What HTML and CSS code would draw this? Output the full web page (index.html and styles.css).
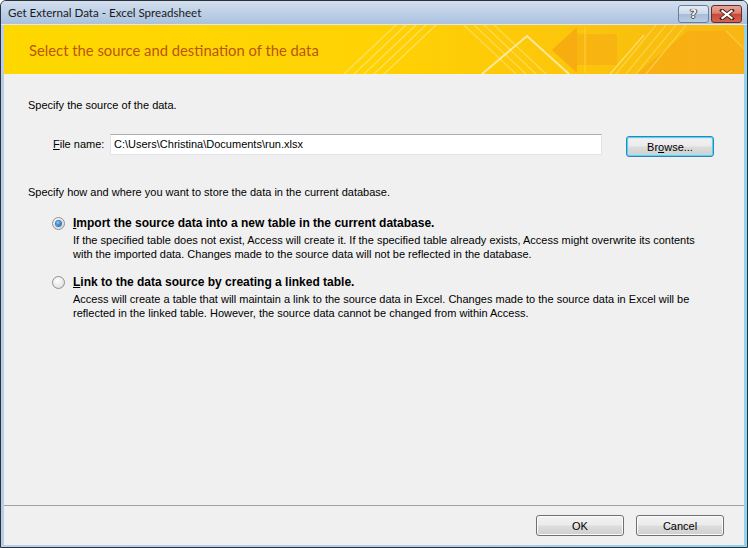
FILE: index.html
```html
<!DOCTYPE html>
<html>
<head>
<meta charset="utf-8">
<link rel="stylesheet" href="styles.css">
</head>
<body>
<div class="window">
  <div class="titlebar">
    <span class="title">Get External Data - Excel Spreadsheet</span>
    <div class="caption-btns">
      <span class="cap help">?</span>
      <span class="cap close">
        <svg width="16" height="11" viewBox="0 0 16 11">
          <path d="M3 1.5 L13 9.5 M13 1.5 L3 9.5" stroke="#4a2320" stroke-width="4" stroke-linecap="square"/>
          <path d="M3.5 2 L12.5 9 M12.5 2 L3.5 9" stroke="#ffffff" stroke-width="2.2" stroke-linecap="square"/>
        </svg>
      </span>
    </div>
  </div>
  <div class="client">
    <div class="banner">
      <svg class="banner-art" width="740" height="49" viewBox="0 0 740 49">
        <defs>
          <linearGradient id="bg" x1="0" y1="0" x2="1" y2="0">
            <stop offset="0" stop-color="#ffd800"/>
            <stop offset="0.5" stop-color="#ffd204"/>
            <stop offset="0.78" stop-color="#fcc50c"/>
            <stop offset="1" stop-color="#f8b714"/>
          </linearGradient>
        </defs>
        <rect width="740" height="49" fill="url(#bg)"/>
        <g stroke="#ffe680" stroke-width="1.4" opacity="0.7">
          <line x1="340" y1="49" x2="392" y2="0"/>
          <line x1="350" y1="49" x2="402" y2="0"/>
          <line x1="360" y1="49" x2="412" y2="0"/>
          <line x1="370" y1="49" x2="422" y2="0"/>
          <line x1="380" y1="49" x2="432" y2="0"/>
        </g>
        <g stroke="#ffe27a" stroke-width="1.3" opacity="0.65">
          <line x1="460" y1="0" x2="512" y2="49"/>
          <line x1="470" y1="0" x2="522" y2="49"/>
          <line x1="480" y1="0" x2="532" y2="49"/>
          <line x1="490" y1="0" x2="542" y2="49"/>
        </g>
        <polygon points="548,25 573,2 573,48" fill="#f6a313" opacity="0.75"/>
        <rect x="573" y="9" width="40" height="31" fill="#f7ab16" opacity="0.6"/>
        <line x1="581" y1="2" x2="581" y2="48" stroke="#ffd34a" stroke-width="1.2" opacity="0.8"/>
        <polyline points="478,49 523,11 565,49" fill="none" stroke="#ffe89a" stroke-width="2"/>
        <line x1="640" y1="10" x2="606" y2="49" stroke="#ffe27a" stroke-width="1.5" opacity="0.8"/>
        <polygon points="632,49 684,6 722,6 740,24 740,49" fill="#f7a916" opacity="0.65"/>
        <g stroke="#ffdc6a" stroke-width="1.3" opacity="0.6">
          <line x1="652" y1="0" x2="612" y2="49"/>
          <line x1="662" y1="0" x2="622" y2="49"/>
          <line x1="672" y1="0" x2="632" y2="49"/>
          <line x1="682" y1="0" x2="642" y2="49"/>
        </g>
        <line x1="722" y1="6" x2="740" y2="24" stroke="#ffd34a" stroke-width="1.2" opacity="0.7"/>
      </svg>
      <h1 class="banner-title">Select the source and destination of the data</h1>
    </div>
    <div class="content">
      <p class="line intro">Specify the source of the data.</p>
      <div class="file-row">
        <label class="file-label"><u>F</u>ile name:</label>
        <div class="textbox">C:\Users\Christina\Documents\run.xlsx</div>
        <span class="button default">Br<u>o</u>wse...</span>
      </div>
      <p class="line intro2">Specify how and where you want to store the data in the current database.</p>
      <div class="option first">
        <div class="option-head">
          <span class="radio checked"><span class="dot"></span></span>
          <span class="option-label"><u>I</u>mport the source data into a new table in the current database.</span>
        </div>
        <p class="option-desc">If the specified table does not exist, Access will create it. If the specified table already exists, Access might overwrite its contents<br>with the imported data. Changes made to the source data will not be reflected in the database.</p>
      </div>
      <div class="option second">
        <div class="option-head">
          <span class="radio"></span>
          <span class="option-label"><u>L</u>ink to the data source by creating a linked table.</span>
        </div>
        <p class="option-desc">Access will create a table that will maintain a link to the source data in Excel. Changes made to the source data in Excel will be<br>reflected in the linked table. However, the source data cannot be changed from within Access.</p>
      </div>
    </div>
    <div class="footer">
      <span class="button">OK</span>
      <span class="button">Cancel</span>
    </div>
  </div>
</div>
</body>
</html>
```

FILE: styles.css
```css
html, body {
  margin: 0;
  padding: 0;
  background: #ffffff;
}

.window {
  width: 748px;
  height: 548px;
  box-sizing: border-box;
  border: 1px solid #2e3138;
  border-radius: 6px 6px 0 0;
  background: linear-gradient(to right, #b9cde6 0%, #b3cbe8 60%, #8fd3ef 100%);
  display: flex;
  flex-direction: column;
  overflow: hidden;
}

.titlebar {
  height: 24px;
  flex: none;
  box-sizing: border-box;
  display: flex;
  align-items: flex-start;
  justify-content: space-between;
  background: linear-gradient(#d3dfee 0%, #c1d2e8 45%, #a9c1de 100%);
  border-bottom: 1px solid #dfe8f3;
}

.title {
  font-family: "Lato", "Liberation Sans", sans-serif;
  font-size: 11.6px;
  color: #1a1a1a;
  margin: 5px 0 0 7px;
  line-height: 14px;
}

.caption-btns {
  display: flex;
  gap: 2px;
  margin: 4px 5px 0 0;
}

.cap {
  width: 31px;
  height: 18px;
  box-sizing: border-box;
  border-radius: 3px;
  display: flex;
  align-items: center;
  justify-content: center;
}

.help {
  border: 1px solid #6a7d95;
  background: linear-gradient(#e4ecf6 0%, #cbd9ea 48%, #a7bdd9 52%, #b7cbe4 100%);
  font-family: "DejaVu Sans", sans-serif;
  font-weight: bold;
  font-size: 12px;
  color: #f4f4f4;
  text-shadow: 0 0 1px #333, 1px 0 0 #555, -1px 0 0 #555, 0 1px 0 #555;
}

.close {
  border: 1px solid #6b2b24;
  background: linear-gradient(#e9a597 0%, #d98070 45%, #c9483a 52%, #d5634f 100%);
}

.client {
  flex: 1;
  margin: 0 3px 2px 3px;
  background: #f0f0f0;
  display: flex;
  flex-direction: column;
}

.banner {
  height: 49px;
  flex: none;
  position: relative;
  display: flex;
  align-items: center;
}

.banner-art {
  position: absolute;
  left: 0;
  top: 0;
  display: block;
}

.banner-title {
  position: relative;
  margin: 0 0 0 25px;
  font-family: "Lato", "Liberation Sans", sans-serif;
  font-weight: normal;
  font-size: 14.8px;
  color: #b9560c;
  line-height: 18px;
}

.content {
  flex: 1;
  padding: 25px 0 0 24px;
  font-family: "Liberation Sans", Arial, sans-serif;
  font-size: 11px;
  color: #000;
}

.line {
  margin: 0;
  line-height: 13px;
}

.file-row {
  display: flex;
  align-items: flex-start;
  margin: 22px 0 0 25px;
  height: 23px;
}

.file-label {
  width: 57px;
  line-height: 21px;
}

.textbox {
  width: 492px;
  height: 21px;
  box-sizing: border-box;
  border: 1px solid #e2e3ea;
  border-top-color: #abadb3;
  background: #fff;
  line-height: 19px;
  padding-left: 3px;
}

.button {
  width: 88px;
  height: 21px;
  box-sizing: border-box;
  border: 1px solid #707070;
  border-radius: 3px;
  background: linear-gradient(#f2f2f2 0%, #ebebeb 48%, #dddddd 52%, #cfcfcf 100%);
  box-shadow: inset 0 0 0 1px #fbfbfb;
  display: flex;
  align-items: center;
  justify-content: center;
  font-family: "Liberation Sans", Arial, sans-serif;
  font-size: 11px;
  color: #000;
}

.button.default {
  margin: 2px 0 0 24px;
  border-color: #3c7fb1;
  box-shadow: inset 0 0 0 1px #48d8fb, inset 0 0 2px 1px #a8e6fa;
}

.intro2 {
  margin-top: 29px;
}

.option {
  margin-left: 24px;
}

.option.first {
  margin-top: 17px;
}

.option.second {
  margin-top: 14px;
}

.option-head {
  display: flex;
  align-items: center;
  height: 14px;
}

.radio {
  width: 13px;
  height: 13px;
  box-sizing: border-box;
  border-radius: 50%;
  border: 1px solid #8f8f8f;
  background: radial-gradient(circle at 40% 35%, #ffffff 0%, #f0f0f0 40%, #d6d6d6 100%);
  margin-right: 8px;
  display: flex;
  align-items: center;
  justify-content: center;
}

.radio .dot {
  width: 5px;
  height: 5px;
  border-radius: 50%;
  background: radial-gradient(circle at 40% 35%, #9ed4f8 0%, #3a8fd0 45%, #1b4f8a 100%);
  box-shadow: 0 0 1px 1px #2a6aa6;
}

.option-label {
  font-weight: bold;
  font-size: 12px;
  line-height: 14px;
}

.option-desc {
  margin: 3px 0 0 21px;
  line-height: 14px;
}

.footer {
  flex: none;
  border-top: 1px solid #a0a0a0;
  padding: 9px 20px 9px 0;
  display: flex;
  justify-content: flex-end;
  gap: 12px;
}
```
